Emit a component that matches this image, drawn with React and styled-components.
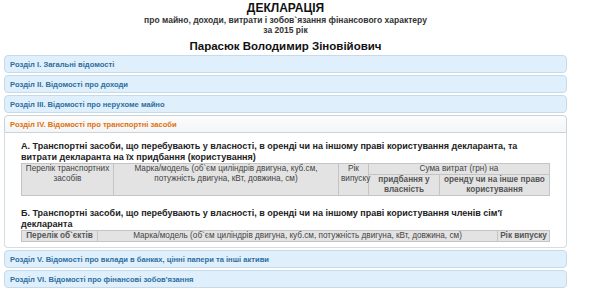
import React from "react";
import styled, { createGlobalStyle } from "styled-components";

const GlobalStyle = createGlobalStyle`
  html, body {
    margin: 0;
    padding: 0;
    background: #ffffff;
  }
  body {
    font-family: "Liberation Sans", Arial, sans-serif;
    color: #222;
  }
`;

const Page = styled.div`
  width: 563px;
  margin-left: 4px;
  padding-top: 2px;
`;

const Title = styled.h1`
  margin: 0;
  font-size: 12px;
  line-height: 13px;
  font-weight: bold;
  text-align: center;
  color: #111;
`;

const Subtitle = styled.div`
  font-size: 8.5px;
  line-height: 10px;
  font-weight: bold;
  text-align: center;
  color: #333;
`;

const Person = styled.h2`
  margin: 5px 0 2px;
  font-size: 11.5px;
  line-height: 13px;
  font-weight: bold;
  text-align: center;
  color: #111;
`;

const Accordion = styled.div`
  display: flex;
  flex-direction: column;
  gap: 2px;
`;

const Header = styled.div`
  height: 16px;
  padding-left: 5px;
  display: flex;
  align-items: center;
  font-size: 7.6px;
  font-weight: bold;
  border: 1px solid ${(p) => (p.$active ? "#c9d3da" : "#c5dbec")};
  border-radius: ${(p) => (p.$active ? "4px 4px 0 0" : "4px")};
  background: ${(p) =>
    p.$active ? "linear-gradient(#fdfdfd, #f3f5f6)" : "#dfeffc"};
  color: ${(p) => (p.$active ? "#e17009" : "#2e6e9e")};
`;

const Content = styled.div`
  border: 1px solid #d3dde4;
  border-top: none;
  border-radius: 0 0 4px 4px;
  background: #fff;
  padding: 8px 16px 5px 16px;
`;

const Heading = styled.h3`
  margin: 0;
  font-size: 9px;
  line-height: 11px;
  font-weight: bold;
  color: #222;
`;

const Gap = styled.div`
  height: ${(p) => p.$h}px;
`;

const Table = styled.table`
  width: 528px;
  table-layout: fixed;
  border-collapse: collapse;
`;

const Th = styled.th`
  background: #e3e3e3;
  border: 1px solid #c4c4c4;
  font-size: 8.2px;
  line-height: 10px;
  font-weight: normal;
  color: #444;
  text-align: center;
  vertical-align: top;
  padding: 0 2px;
`;

const ThB = styled(Th)`
  font-weight: bold;
  color: #555;
`;

const sections = [
  "Розділ I. Загальні відомості",
  "Розділ II. Відомості про доходи",
  "Розділ III. Відомості про нерухоме майно",
];

const after = [
  "Розділ V. Відомості про вклади в банках, цінні папери та інші активи",
  "Розділ VI. Відомості про фінансові зобов'язання",
];

export default function App() {
  return (
    <>
      <GlobalStyle />
      <Page>
        <Title>ДЕКЛАРАЦІЯ</Title>
        <Subtitle>
          про майно, доходи, витрати і зобов`язання фінансового характеру
        </Subtitle>
        <Subtitle>за 2015 рік</Subtitle>
        <Person>Парасюк Володимир Зіновійович</Person>
        <Accordion>
          {sections.map((s) => (
            <Header key={s}>{s}</Header>
          ))}
          <div>
            <Header $active>Розділ IV. Відомості про транспортні засоби</Header>
            <Content>
              <Heading>
                А. Транспортні засоби, що перебувають у власності, в оренді чи
                на іншому праві користування декларанта, та витрати декларанта
                на їх придбання (користування)
              </Heading>
              <Table>
                <colgroup>
                  <col style={{ width: 92 }} />
                  <col style={{ width: 225 }} />
                  <col style={{ width: 30 }} />
                  <col style={{ width: 71 }} />
                  <col style={{ width: 110 }} />
                </colgroup>
                <thead>
                  <tr>
                    <Th rowSpan={2}>Перелік транспортних засобів</Th>
                    <Th rowSpan={2}>
                      Марка/модель (об`єм циліндрів двигуна, куб.см, потужність
                      двигуна, кВт, довжина, см)
                    </Th>
                    <Th rowSpan={2}>Рік випуску</Th>
                    <Th colSpan={2}>Сума витрат (грн) на</Th>
                  </tr>
                  <tr>
                    <ThB>придбання у власність</ThB>
                    <ThB>оренду чи на інше право користування</ThB>
                  </tr>
                </thead>
              </Table>
              <Gap $h={12} />
              <Heading>
                Б. Транспортні засоби, що перебувають у власності, в оренді чи
                на іншому праві користування членів сім'ї декларанта
              </Heading>
              <Table>
                <colgroup>
                  <col style={{ width: 76 }} />
                  <col style={{ width: 400 }} />
                  <col style={{ width: 52 }} />
                </colgroup>
                <thead>
                  <tr>
                    <ThB>Перелік об`єктів</ThB>
                    <Th>
                      Марка/модель (об`єм циліндрів двигуна, куб.см,
                      потужність двигуна, кВт, довжина, см)
                    </Th>
                    <ThB>Рік випуску</ThB>
                  </tr>
                </thead>
              </Table>
            </Content>
          </div>
          {after.map((s) => (
            <Header key={s}>{s}</Header>
          ))}
        </Accordion>
      </Page>
    </>
  );
}
